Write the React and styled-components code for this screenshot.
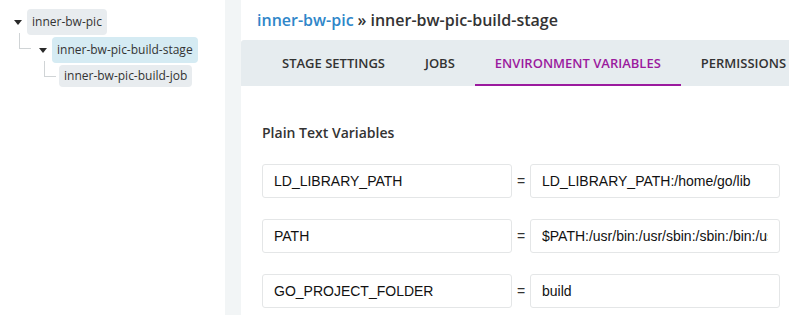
import styled, { createGlobalStyle } from 'styled-components';

const GlobalStyle = createGlobalStyle`
    body {
        margin: 0;
        font-family: "Open Sans", "Noto Sans", sans-serif;
        color: #333;
        background: #fff;
    }
`

const variables = [
    { name: 'LD_LIBRARY_PATH', value: 'LD_LIBRARY_PATH:/home/go/lib' },
    { name: 'PATH', value: '$PATH:/usr/bin:/usr/sbin:/sbin:/bin:/usr/local/bin' },
    { name: 'GO_PROJECT_FOLDER', value: 'build' },
];

const tabs = ['Stage Settings', 'Jobs', 'Environment Variables', 'Permissions'];

export default function App() {
    return (
        <>
            <GlobalStyle />
            <Page>
                <Sidebar>
                    <Tree>
                        <Node>
                            <Row>
                                <Caret />
                                <Label>inner-bw-pic</Label>
                            </Row>
                            <Children $indent={25}>
                                <Node $child $indent={25}>
                                    <Row>
                                        <Caret />
                                        <Label $selected>inner-bw-pic-build-stage</Label>
                                    </Row>
                                    <Children $indent={20}>
                                        <Node $child $indent={20}>
                                            <Row>
                                                <Label $small>inner-bw-pic-build-job</Label>
                                            </Row>
                                        </Node>
                                    </Children>
                                </Node>
                            </Children>
                        </Node>
                    </Tree>
                </Sidebar>
                <Gutter />
                <Main>
                    <Breadcrumb>
                        <Crumb>inner-bw-pic</Crumb>
                        <Sep>»</Sep>
                        <Current>inner-bw-pic-build-stage</Current>
                    </Breadcrumb>
                    <TabBar>
                        {tabs.map((t, i) => (
                            <Tab key={t} $active={i === 2}>{t}</Tab>
                        ))}
                    </TabBar>
                    <Content>
                        <SectionTitle>Plain Text Variables</SectionTitle>
                        {variables.map((v) => (
                            <VarRow key={v.name}>
                                <Field defaultValue={v.name} readOnly />
                                <Equals>=</Equals>
                                <Field defaultValue={v.value} readOnly />
                            </VarRow>
                        ))}
                    </Content>
                </Main>
            </Page>
        </>
    );
}

const Page = styled.div`
    display: flex;
    width: 789px;
    height: 315px;
    overflow: hidden;
`

const Sidebar = styled.aside`
    width: 225px;
    flex-shrink: 0;
    background: #fff;
    padding: 9px 0 0 14px;
    box-sizing: border-box;
`

const Tree = styled.ul`
    list-style: none;
    margin: 0;
    padding: 0;
`

const Children = styled.ul`
    list-style: none;
    margin: 2px 0 0;
    padding: 0 0 0 ${(p) => p.$indent}px;
`

const Node = styled.li`
    position: relative;
    margin-top: ${(p) => (p.$child ? '2px' : '0')};

    &::before {
        display: ${(p) => (p.$child ? 'block' : 'none')};
        content: '';
        position: absolute;
        left: ${(p) => -(p.$indent - 5)}px;
        top: -4px;
        width: 11px;
        height: 15px;
        border-left: 1px solid #d0d4d6;
        border-bottom: 1px solid #d0d4d6;
    }
`

const Row = styled.div`
    display: flex;
    align-items: center;
    gap: 5px;
`

const Caret = styled.span`
    width: 0;
    height: 0;
    border-left: 4px solid transparent;
    border-right: 4px solid transparent;
    border-top: 5px solid #2a2a2a;
`

const Label = styled.span`
    display: inline-block;
    height: ${(p) => (p.$small ? 22 : 26)}px;
    line-height: ${(p) => (p.$small ? 22 : 26)}px;
    padding: 0 5px;
    font-size: 12px;
    color: #333;
    border-radius: 4px;
    background: ${(p) => (p.$selected ? '#d5ebf3' : '#e8ecef')};
    white-space: nowrap;
`

const Gutter = styled.div`
    width: 16px;
    flex-shrink: 0;
    background: #f2f5f6;
`

const Main = styled.main`
    flex: 1;
    min-width: 560px;
    background: #fff;
`

const Breadcrumb = styled.div`
    height: 40px;
    display: flex;
    align-items: center;
    padding-left: 16px;
    gap: 4px;
    font-size: 16px;
    font-weight: 600;
    white-space: nowrap;
`

const Crumb = styled.span`
    color: #2f86c9;
`

const Sep = styled.span`
    color: #333;
`

const Current = styled.span`
    color: #333;
`

const TabBar = styled.nav`
    display: flex;
    height: 46px;
    padding-left: 21px;
    background: #e6ecef;
    border-radius: 3px 0 0 0;
    white-space: nowrap;
`

const Tab = styled.div`
    display: flex;
    align-items: center;
    padding: 2px 20px 0;
    font-size: 13px;
    font-weight: 600;
    text-transform: uppercase;
    color: ${(p) => (p.$active ? '#9b1a9e' : '#333')};
    border-bottom: 2px solid ${(p) => (p.$active ? '#9b1a9e' : 'transparent')};
    box-sizing: border-box;
`

const Content = styled.section`
    padding: 36px 0 0 21px;
`

const SectionTitle = styled.h3`
    margin: 0 0 20px;
    font-size: 14px;
    font-weight: 600;
    color: #333;
    line-height: 22px;
`

const VarRow = styled.div`
    display: flex;
    align-items: center;
    margin-bottom: 21px;
`

const Field = styled.input`
    width: 250px;
    height: 34px;
    flex-shrink: 0;
    box-sizing: border-box;
    padding: 0 11px;
    border: 1px solid #e4e6e7;
    border-radius: 3px;
    font-family: "Liberation Sans", Arial, sans-serif;
    font-size: 14px;
    color: #111;
    outline: none;
`

const Equals = styled.span`
    width: 18px;
    text-align: center;
    font-family: "Liberation Sans", Arial, sans-serif;
    font-size: 14px;
    color: #333;
`
